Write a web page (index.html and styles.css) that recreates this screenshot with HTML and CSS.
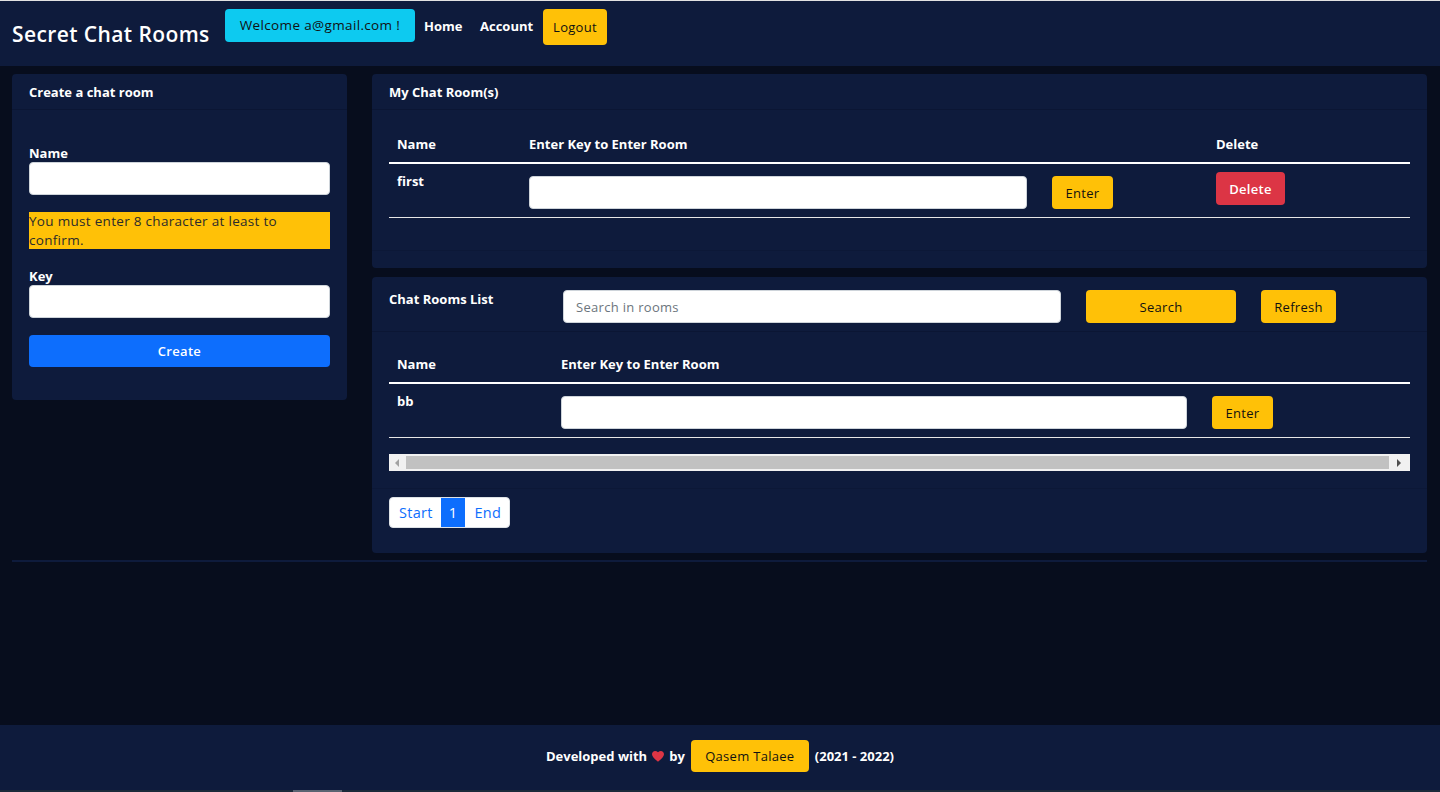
FILE: index.html
```html
<!DOCTYPE html>
<html lang="en">
<head>
<meta charset="utf-8">
<title>Secret Chat Rooms</title>
<link rel="stylesheet" href="styles.css">
</head>
<body>
<div class="page">
  <nav class="navbar">
    <div class="brand">Secret Chat Rooms</div>
    <div class="welcome">Welcome a@gmail.com !</div>
    <a class="nav-link nav-home">Home</a>
    <a class="nav-link nav-account">Account</a>
    <button class="btn btn-warning logout">Logout</button>
  </nav>

  <main class="main">
    <div class="left-col">
      <section class="card">
        <div class="card-header">Create a chat room</div>
        <div class="card-body create-body">
          <label class="form-label">Name</label>
          <input class="form-control" type="text">
          <div class="alert">You must enter 8 character at least to confirm.</div>
          <label class="form-label key-label">Key</label>
          <input class="form-control" type="text">
          <button class="btn btn-primary create-btn">Create</button>
        </div>
      </section>
    </div>

    <div class="right-col">
      <section class="card">
        <div class="card-header">My Chat Room(s)</div>
        <div class="card-body table-body">
          <table class="table my-table">
            <thead>
              <tr><th class="c-name">Name</th><th class="c-key">Enter Key to Enter Room</th><th class="c-del">Delete</th></tr>
            </thead>
            <tbody>
              <tr>
                <td class="c-name">first</td>
                <td class="c-key">
                  <div class="enter-form">
                    <input class="form-control key-input-1" type="text">
                    <button class="btn btn-warning enter-btn">Enter</button>
                  </div>
                </td>
                <td class="c-del"><button class="btn btn-danger delete-btn">Delete</button></td>
              </tr>
            </tbody>
          </table>
        </div>
        <div class="card-footer empty-footer"></div>
      </section>

      <section class="card">
        <div class="card-header list-header">
          <div class="list-title">Chat Rooms List</div>
          <input class="form-control search-input" type="text" placeholder="Search in rooms">
          <button class="btn btn-warning search-btn">Search</button>
          <button class="btn btn-warning refresh-btn">Refresh</button>
        </div>
        <div class="card-body list-body">
          <table class="table list-table">
            <thead>
              <tr><th class="l-name">Name</th><th class="l-key">Enter Key to Enter Room</th></tr>
            </thead>
            <tbody>
              <tr>
                <td class="l-name">bb</td>
                <td class="l-key">
                  <div class="enter-form">
                    <input class="form-control key-input-2" type="text">
                    <button class="btn btn-warning enter-btn enter-btn-2">Enter</button>
                  </div>
                </td>
              </tr>
            </tbody>
          </table>
          <div class="hscroll">
            <div class="hs-arrow hs-left"><svg width="5" height="8" viewBox="0 0 5 8"><path d="M4 0 L0 4 L4 8 Z" fill="#a3a3a3"/></svg></div>
            <div class="hs-thumb"></div>
            <div class="hs-arrow hs-right"><svg width="5" height="8" viewBox="0 0 5 8"><path d="M0 0 L4 4 L0 8 Z" fill="#505050"/></svg></div>
          </div>
        </div>
        <div class="card-footer pager-footer">
          <div class="pagination">
            <span class="page-item">Start</span>
            <span class="page-item active">1</span>
            <span class="page-item">End</span>
          </div>
        </div>
      </section>
    </div>

    <hr class="divider">
  </main>

  <footer class="footer">
    <span>Developed with</span>
    <svg class="heart" width="12" height="11" viewBox="0 0 24 22"><path d="M12 21.5 L10.3 20 C4.2 14.5 0 10.7 0 6.3 0 2.7 2.8 0 6.3 0 8.3 0 10.2 0.9 12 2.4 13.8 0.9 15.7 0 17.7 0 21.2 0 24 2.7 24 6.3 24 10.7 19.8 14.5 13.7 20 Z" fill="#dc3545"/></svg>
    <span>by</span>
    <button class="btn btn-warning author">Qasem Talaee</button>
    <span>(2021 - 2022)</span>
  </footer>
  <div class="bottom-strip"><div class="strip-thumb"></div></div>
</div>
</body>
</html>
```

FILE: styles.css
```css
* { box-sizing: border-box; }

html, body {
  margin: 0;
  padding: 0;
}

body {
  background: #070d1d;
  color: #fff;
  font-family: "Open Sans", "Liberation Sans", sans-serif;
  font-size: 13px;
}

.page {
  height: 792px;
  display: flex;
  flex-direction: column;
  overflow: hidden;
}

/* Navbar */
.navbar {
  height: 66px;
  flex: 0 0 66px;
  background: #0e1b3c;
  border-top: 1px solid #e2e2e2;
  display: flex;
  align-items: flex-start;
  padding: 0 0 0 12px;
}

.brand {
  font-size: 21px;
  font-weight: 600;
  letter-spacing: 0.4px;
  line-height: 24px;
  margin-top: 21px;
  width: 213px;
  white-space: nowrap;
}

.welcome {
  margin-top: 8px;
  width: 190px;
  height: 33px;
  background: #0dcaf0;
  color: #111;
  border-radius: 4px;
  font-size: 13.5px;
  letter-spacing: 0.35px;
  line-height: 33px;
  text-align: center;
}

.nav-link {
  color: #fff;
  font-weight: 700;
  font-size: 13px;
  line-height: 18px;
  margin-top: 16px;
}

.nav-home { margin-left: 9px; width: 56px; }
.nav-account { width: 63px; }

.logout {
  margin-top: 8px;
  width: 64px;
  height: 36px;
}

/* Buttons */
.btn {
  font-family: inherit;
  font-size: 13px;
  letter-spacing: 0.3px;
  border: 0;
  border-radius: 4px;
  padding: 0;
  cursor: pointer;
}

.btn-warning { background: #ffc107; color: #111; }
.btn-primary { background: #0d6efd; color: #fff; font-weight: 600; }
.btn-danger { background: #dc3545; color: #fff; font-weight: 600; }

/* Main */
.main {
  flex: 1 1 auto;
  display: grid;
  grid-template-columns: 335px 1fr;
  column-gap: 25px;
  align-items: start;
  align-content: start;
  padding: 8px 13px 0 12px;
}

.left-col, .right-col {
  display: flex;
  flex-direction: column;
  gap: 9px;
}

.card {
  background: #0e1b3c;
  border-radius: 4px;
  overflow: hidden;
}

.card-header {
  height: 36px;
  padding: 0 17px;
  font-weight: 700;
  font-size: 13px;
  line-height: 36px;
  border-bottom: 1px solid #0b1634;
}

.card-body {
  padding: 0 17px;
}

.create-body {
  padding: 34px 17px 33px;
  display: flex;
  flex-direction: column;
}

.form-label {
  font-weight: 700;
  font-size: 13px;
  line-height: 18px;
  margin-bottom: 0;
  height: 18px;
}

.form-control {
  display: block;
  width: 100%;
  height: 33px;
  background: #fff;
  border: 1px solid #ced4da;
  border-radius: 4px;
  font-family: inherit;
  font-size: 13px;
  padding: 0 12px;
}

.alert {
  margin-top: 17px;
  background: #ffc107;
  color: #2b2b2b;
  font-size: 13.5px;
  letter-spacing: 0.3px;
  line-height: 19px;
  height: 37px;
  padding: 0;
  overflow: hidden;
}

.key-label { margin-top: 18px; }

.create-btn {
  margin-top: 17px;
  width: 100%;
  height: 32px;
}

/* Tables */
.table {
  width: 100%;
  border-collapse: collapse;
  color: #fff;
}

.table th {
  text-align: left;
  font-weight: 700;
  font-size: 13px;
  line-height: 19px;
  padding: 9px 8px 8px;
  border-bottom: 2px solid #fff;
}

.table td {
  vertical-align: top;
  font-weight: 700;
  font-size: 13px;
  line-height: 19px;
  padding: 8px 8px 8px;
  border-bottom: 1px solid #e6e6e6;
}

.table-body { padding: 16px 17px 16px; }
.my-table { margin-bottom: 16px; }

.c-name { width: 132px; }
.c-del { width: 202px; }

.enter-form {
  display: flex;
  align-items: flex-start;
  gap: 25px;
  padding-top: 4px;
}

.key-input-1 { width: 498px; height: 33px; }
.key-input-2 { width: 626px; height: 33px; }

.enter-btn {
  width: 61px;
  height: 33px;
  flex: 0 0 auto;
}

.delete-btn {
  width: 69px;
  height: 33px;
}

.empty-footer {
  height: 18px;
  border-top: 1px solid #0c1837;
}

/* List card */
.list-header {
  height: 55px;
  display: flex;
  align-items: flex-start;
  padding: 13px 17px 0;
  line-height: 19px;
}

.list-title {
  width: 174px;
  margin-top: 0;
}

.search-input {
  width: 498px;
  height: 33px;
  font-weight: 400;
  letter-spacing: 0.3px;
}

.search-input::placeholder { color: #6c757d; }

.search-btn {
  margin-left: 25px;
  width: 150px;
  height: 33px;
  font-weight: 500;
}

.refresh-btn {
  margin-left: 25px;
  width: 75px;
  height: 33px;
  font-weight: 500;
}

.list-body { padding: 14px 17px 17px; }

.l-name { width: 164px; }

.list-table { margin-bottom: 16px; }

.hscroll {
  height: 17px;
  background: #f1f1f1;
  display: flex;
  align-items: center;
}

.hs-arrow {
  width: 17px;
  height: 17px;
  display: flex;
  align-items: center;
  justify-content: center;
}

.hs-left { width: 17px; }
.hs-right { width: 21px; }

.hs-thumb {
  flex: 1;
  height: 13px;
  background: #c1c1c1;
}

.pager-footer {
  border-top: 1px solid #0c1837;
  padding: 8px 17px 25px;
}

.pagination {
  display: inline-flex;
  background: #fff;
  border-radius: 4px;
  overflow: hidden;
  border: 1px solid #dee2e6;
  height: 31px;
}

.page-item {
  color: #0d6efd;
  font-size: 14.5px;
  font-weight: 500;
  letter-spacing: 0.3px;
  line-height: 29px;
  padding: 0 8px 0 9px;
}

.page-item.active {
  background: #0d6efd;
  color: #fff;
  padding: 0 8px;
}

.divider {
  grid-column: 1 / -1;
  height: 2px;
  border: 0;
  background: #0e1b3c;
  margin: 7px 0 0;
}

/* Footer */
.footer {
  flex: 0 0 65px;
  height: 65px;
  background: #0e1b3c;
  display: flex;
  align-items: center;
  justify-content: center;
  gap: 4px;
  font-weight: 700;
  font-size: 13px;
  padding-bottom: 3px;
}

.heart { margin: 0 1px; }

.author {
  width: 118px;
  height: 32px;
  margin: 0 2px;
  font-weight: 400;
}

.bottom-strip {
  flex: 0 0 2px;
  height: 2px;
  background: #1b2a3a;
}

.strip-thumb {
  margin-left: 293px;
  width: 49px;
  height: 2px;
  background: #5a6472;
}
```
